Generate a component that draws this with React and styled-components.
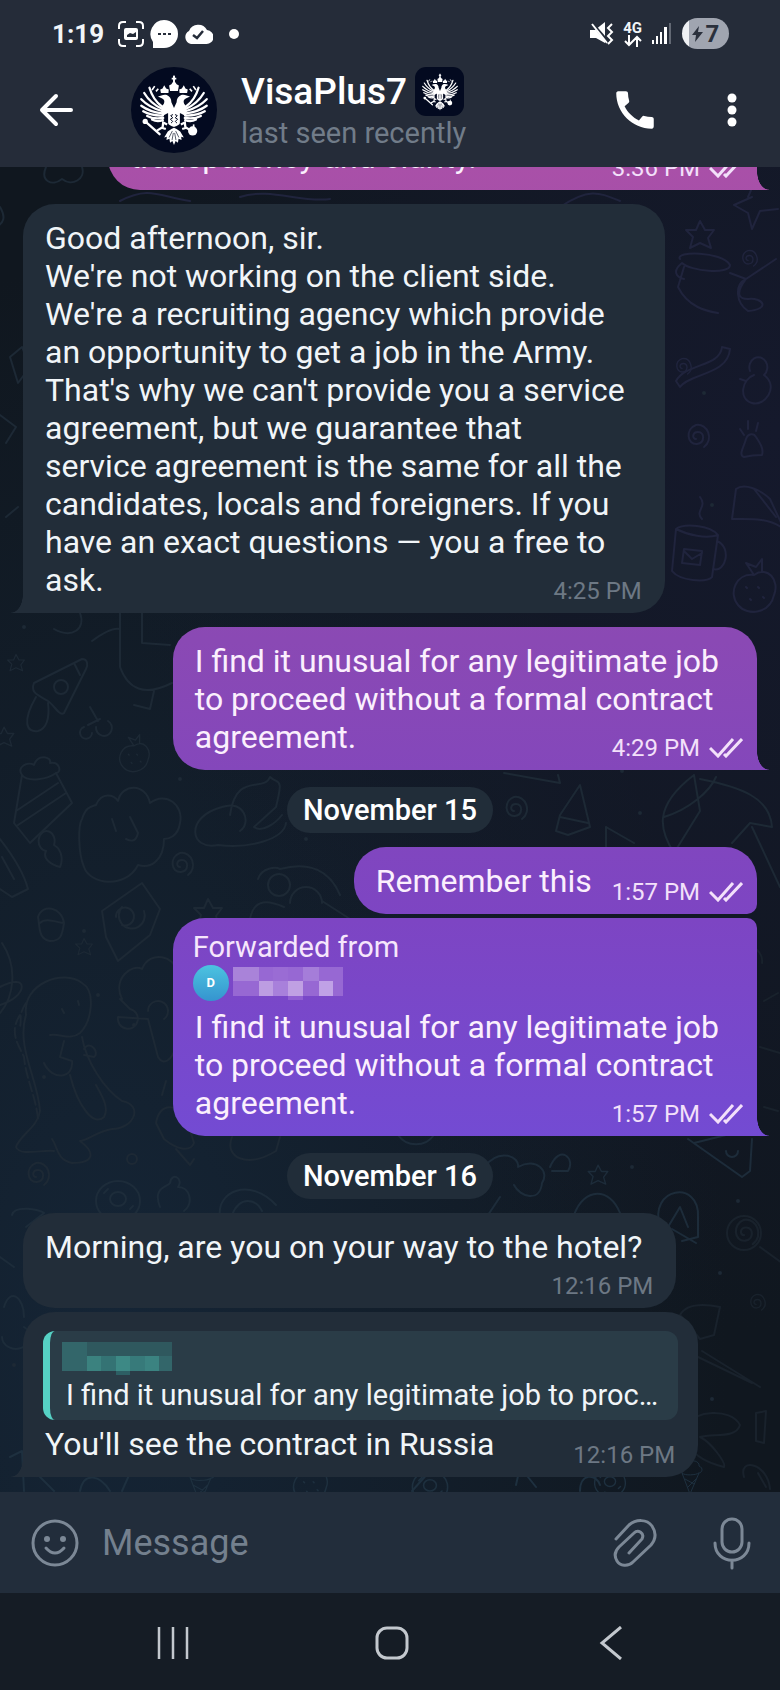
import React from 'react'
import styled, { createGlobalStyle } from 'styled-components'
import { MdCall } from 'react-icons/md'

const GlobalStyle = createGlobalStyle`
  * {
    box-sizing: border-box;
  }
  body {
    margin: 0;
    background: #151c25;
    font-family: Roboto, "Noto Sans", sans-serif;
    color: #f1f5f8;
  }
  button {
    display: flex;
    align-items: center;
    justify-content: center;
    padding: 0;
    border: 0;
    background: none;
    color: inherit;
    cursor: pointer;
  }
  svg {
    display: block;
    flex: none;
  }
`
const Page = styled.div`
  display: flex;
  flex-direction: column;
  height: 100vh;
`

/* header */
const Header = styled.header`
  background: #252c39;
  padding-bottom: 14px;
`
const StatusBar = styled.div`
  display: flex;
  align-items: center;
  justify-content: space-between;
  height: 67px;
  padding: 0 51px 0 52px;
`
const StatusGroup = styled.div`
  display: flex;
  align-items: center;
  gap: ${({ gap }) => gap}px;
`
const Clock = styled.time`
  font-size: 26px;
  font-weight: 700;
  line-height: 32px;
  margin-right: 8px;
`
const Network = styled.div`
  display: flex;
  flex-direction: column;
  align-items: center;
  font-size: 15px;
  font-weight: 700;
  line-height: 14px;
`
const Battery = styled.div`
  display: flex;
  align-items: center;
  justify-content: center;
  gap: 3px;
  width: 47px;
  height: 31px;
  border-radius: 16px;
  background: linear-gradient(to right, #eef0f3 7px, #a0a5b0 7px);
  color: #2a303c;
  font-size: 24px;
  font-weight: 700;
`
const ChatBar = styled.div`
  display: flex;
  align-items: center;
  height: 86px;
  padding: 0 24px 0 32px;
`
const BackButton = styled.button`
  width: 48px;
  height: 48px;
  margin-right: 51px;
`
const Avatar = styled.div`
  display: flex;
  align-items: center;
  justify-content: center;
  width: ${({ small }) => (small ? 49 : 86)}px;
  height: ${({ small }) => (small ? 49 : 86)}px;
  border-radius: ${({ small }) => (small ? '11px' : '50%')};
  background: #030a20;
`
const Contact = styled.div`
  flex: 1;
  align-self: flex-start;
  padding-left: 24px;
`
const NameRow = styled.div`
  display: flex;
  align-items: center;
  gap: 8px;
`
const Name = styled.h1`
  margin: 0;
  font-size: 37px;
  font-weight: 500;
  line-height: 49px;
  color: #fff;
`
const LastSeen = styled.p`
  margin: 0;
  font-size: 29px;
  line-height: 34px;
  color: #717c89;
`
const CallButton = styled.button`
  width: 50px;
  height: 50px;
  margin-right: 48px;
`
const MenuButton = styled.button`
  width: 48px;
  height: 48px;
`

/* messages */
const Chat = styled.main`
  position: relative;
  display: flex;
  flex: 1;
  flex-direction: column;
  justify-content: flex-end;
  min-height: 0;
  overflow: hidden;
  padding: 0 23px 15px;
  background:
    radial-gradient(ellipse at 100% 20%, #15192c 0%, rgba(21, 25, 44, 0) 60%),
    radial-gradient(ellipse at 15% 88%, #152536 0%, rgba(21, 37, 54, 0) 65%),
    #10171f;
`
const Wallpaper = styled.svg`
  position: absolute;
  top: 0;
  left: 0;
  width: 100%;
  height: 100%;
`
const Bubble = styled.article`
  position: relative;
  display: flex;
  flex-direction: column;
  align-self: ${({ out }) => (out ? 'flex-end' : 'flex-start')};
  width: ${({ wide }) => (wide ? 'calc(100% - 85px)' : 'auto')};
  margin-top: ${({ joined }) => (joined ? 4 : 14)}px;
  padding: ${({ top = 15 }) => top}px ${({ out }) => (out ? 14 : 20)}px 14px 20px;
  border-radius: 32px;
  border-top-right-radius: ${({ out, joined }) => (out && joined ? 10 : 32)}px;
  border-bottom-right-radius: ${({ out, tail }) => (out ? (tail ? 0 : 10) : 32)}px;
  border-bottom-left-radius: ${({ out, tail }) => (!out && tail ? 0 : 32)}px;
  background: ${({ out }) =>
    out
      ? 'linear-gradient(#a950a8 167px, #8a49b4 640px, #7d45c3 920px, #734bd3 1140px) fixed'
      : '#222d39'};

  &::after {
    content: "";
    display: ${({ tail }) => (tail ? 'block' : 'none')};
    position: absolute;
    bottom: 0;
    ${({ out }) => (out ? 'left: 100%' : 'right: 100%')};
    width: 12px;
    height: 18px;
    background: inherit;
    mask: radial-gradient(
      ellipse 12px 18px at ${({ out }) => (out ? '100%' : '0')} 0,
      transparent 96%,
      #000 100%
    );
  }
`
const Line = styled.div`
  display: flex;
  align-items: flex-end;
  justify-content: space-between;
  gap: 18px;
`
const Text = styled.p`
  margin: 0;
  padding: 0 ${({ room = 2 }) => room}px 0 2px;
  font-size: 32px;
  line-height: 38px;
  white-space: pre-line;
  color: ${({ out }) => (out ? '#fbeffd' : '#f1f5f8')};
`
const Meta = styled.span`
  display: flex;
  align-items: center;
  align-self: flex-end;
  gap: 9px;
  height: 28px;
  margin: ${({ below }) => (below ? 6 : 0)}px ${({ out }) => (out ? 0 : 3)}px -6px 0;
  font-size: 24px;
  line-height: 28px;
  white-space: nowrap;
  color: ${({ out }) => (out ? '#f3e0fa' : '#6d7884')};
`
// floats beside the last line of a paragraph, past the text's own right padding
const EndMeta = styled(Meta)`
  float: right;
  margin: 16px ${({ out, room = 2 }) => (out ? -room : 3 - room)}px -6px 0;
`
const DateChip = styled.div`
  position: relative;
  align-self: center;
  margin: 17px 0 0;
  padding: 0 16px;
  border-radius: 23px;
  background: #212d39;
  color: #fff;
  font-size: 29px;
  font-weight: 500;
  line-height: 46px;
`
const Forwarded = styled.div`
  padding: 0 0 7px;
  font-size: 29px;
  line-height: 36px;
  color: #f6e6fc;
`
const Sender = styled.div`
  display: flex;
  align-items: center;
  gap: 4px;
`
const Initial = styled.span`
  width: 36px;
  height: 36px;
  border-radius: 50%;
  background: linear-gradient(#4cc3e0, #3594cf);
  color: #fff;
  font-size: 13px;
  font-weight: 700;
  line-height: 36px;
  text-align: center;
`
const Quote = styled.blockquote`
  margin: 0 0 5px;
  padding: 11px 20px 7px 12px;
  border-left: 7px solid #56d1c4;
  border-radius: 12px;
  background: #2a3c47;
  font-size: 29px;
  line-height: 36px;
`
const QuoteText = styled.p`
  margin: 0;
  padding: 2px 0 0 4px;
  white-space: nowrap;
`

/* composer and system bar */
const Composer = styled.form`
  display: flex;
  align-items: center;
  height: 101px;
  padding: 0 23px 0 31px;
  background: #222d3b;
  color: #7c8896;
`
const MessageInput = styled.input`
  flex: 1;
  min-width: 0;
  margin-left: 23px;
  padding: 0;
  border: 0;
  outline: 0;
  background: none;
  color: #f1f5f8;
  font: 36px/44px Roboto, sans-serif;

  &::placeholder {
    color: #74808e;
    opacity: 1;
  }
`
const AttachButton = styled.button`
  margin-right: 49px;
`
const NavBar = styled.nav`
  display: grid;
  grid-template-columns: repeat(3, 1fr);
  height: 97px;
  padding: 3px 60px 0 64px;
  background: #151c25;
  color: #c3c8ce;
`

// one half of the crest, drawn from the centre axis outwards
const CrestHalf = () => (
  <>
    <g fill="none" stroke="#fff" strokeWidth="7" strokeLinecap="round">
      <path d="M36 -8Q64 -28 75 -66" />
      <path d="M37 -2Q72 -18 91 -50" />
      <path d="M37 5Q76 -6 100 -31" />
      <path d="M36 12Q74 8 100 -11" />
      <path d="M34 19Q70 20 94 6" />
      <path d="M33 26Q62 31 82 20" />
      <path d="M34 33Q52 40 67 31" />
    </g>
    <path fill="#fff" d="M0 12L0 -4L8 -22C8 -33 13 -40 22 -44C31 -47 40 -42 49 -39L36 -33C29 -30 28 -24 31 -17L38 -8L38 22L20 12Z" />
    <path fill="#fff" d="M17 -50L40 -50L42 -61L35 -64L30 -74L24 -64L16 -61Z" />
    <path fill="#fff" d="M0 -56L12 -56L15 -73L8 -77L4 -83L0 -84Z" />
    <path fill="none" stroke="#fff" strokeWidth="5" d="M0 -103L0 -80M0 -94L7 -94M48 -63L55 -55M59 -71L67 -59" />
    <path fill="#fff" d="M0 8L18 8L18 40C18 48 8 50 0 54Z" />
    <path fill="none" stroke="#030a20" strokeWidth="3" d="M3 16L10 19L4 26L11 30L4 37L9 42" />
    <path fill="none" stroke="#fff" strokeWidth="7" d="M21 46L33 40L35 57L25 60M35 55L52 65" />
    <path fill="#fff" d="M0 56L8 60L19 68L30 86L22 84L23 94L14 90L12 102L5 97L0 109Z" />
    <path fill="none" stroke="#030a20" strokeWidth="2" d="M5 66L15 86M2 72L6 94" />
  </>
)
const Crest = ({ size }) => (
  <svg width={size} height={size} viewBox="-108 -108 216 220" aria-hidden="true">
    <CrestHalf />
    <g transform="scale(-1 1)">
      <CrestHalf />
    </g>
    <path fill="none" stroke="#fff" strokeWidth="7" strokeLinecap="round" d="M-88 37L-44 76" />
    <circle cx="-88" cy="37" r="8" fill="#fff" />
    <circle cx="57" cy="66" r="14" fill="#fff" />
    <path stroke="#fff" strokeWidth="5" d="M60 46V56" />
  </svg>
)

const Checks = () => (
  <svg width="34" height="20" viewBox="0 0 34 20" fill="none" stroke="currentColor" strokeWidth="3" aria-hidden="true">
    <path d="M1 10L9 18L24 1" />
    <path d="M15 16L17 18L33 1" />
  </svg>
)

const Pixels = ({ cells, base }) => (
  <svg width={110} height={33} viewBox="0 0 110 33" aria-hidden="true">
    <rect width="110" height="29" fill={base} />
    {cells.map(([x, y, w, h, fill]) => (
      <rect key={`${x}-${y}`} x={x} y={y} width={w} height={h} fill={fill} />
    ))}
  </svg>
)

const purpleCells = [
  [0, 0, 26, 14, '#a983d9'],
  [40, 0, 15, 14, '#9a6cd4'],
  [70, 0, 16, 14, '#a57dd9'],
  [26, 14, 14, 15, '#bd9de2'],
  [40, 14, 15, 15, '#a880db'],
  [55, 14, 15, 15, '#c0a0e3'],
  [86, 14, 14, 15, '#c0a1e6'],
  [55, 29, 15, 4, '#905fd2'],
]
const tealCells = [
  [25, 0, 85, 14, '#2f585e'],
  [25, 14, 14, 15, '#3b827f'],
  [39, 14, 15, 15, '#347374'],
  [54, 14, 14, 15, '#3d8985'],
  [68, 14, 15, 15, '#377a7a'],
  [83, 14, 14, 15, '#3b8381'],
  [54, 29, 14, 4, '#2d5f64'],
]

const Star = ({ at, s = 1 }) => (
  <path transform={`translate(${at}) scale(${s})`} d="M0 -14L5 -5L14 -5L8 3L11 13L0 8L-10 13L-7 2L-14 -5L-4 -5Z" />
)
const Swirl = ({ at, s = 1 }) => (
  <path transform={`translate(${at}) scale(${s})`} d="M0 2C-4 2 -4 -5 2 -5C9 -5 9 6 1 7C-9 8 -11 -8 0 -12C12 -14 18 3 8 10" />
)
const Cloud = ({ at, s = 1 }) => (
  <path transform={`translate(${at}) scale(${s})`} d="M-28 -22C-22 -36 -10 -32 -6 -26C-2 -44 22 -44 26 -24C42 -36 60 -22 56 -4C54 10 44 12 40 12C40 34 26 42 14 38C2 62 -34 58 -40 40C-46 26 -46 -2 -42 -8C-38 -20 -34 -20 -28 -22ZM-12 -8L-8 4M6 -10L14 6C12 16 6 14 2 12" />
)
const Fruit = ({ at, s = 1 }) => (
  <path transform={`translate(${at}) scale(${s})`} d="M0 -16C14 -26 26 -10 20 4C16 22 -6 26 -16 14C-26 2 -18 -18 0 -16ZM0 -16L-8 -28L2 -24L8 -32L8 -19M-8 -4L-7 -3M4 -4L5 -3M-4 8L-3 9M9 6L10 7" />
)
const Cake = ({ at, s = 1 }) => (
  <path transform={`translate(${at}) scale(${s})`} d="M-20 -26L-28 22L-12 42L30 2L14 -28M-20 -26C-26 -34 -14 -40 -8 -36C-4 -48 10 -44 8 -38C18 -40 20 -28 14 -28C6 -22 -14 -18 -20 -26ZM-26 10L16 -18M-24 24L24 -8" />
)
const Pizza = ({ at, s = 1 }) => (
  <path transform={`translate(${at}) scale(${s})`} d="M-26 -8L22 -32C28 -32 28 -26 26 -22L4 22C0 26 -6 14 -12 10C-22 4 -30 2 -26 -8ZM8 -4A7 7 0 1 1 -6 -4A7 7 0 1 1 8 -4M-24 6C-38 30 -34 42 -22 40C-14 38 -10 28 -12 12M14 -28L20 -16" />
)
const Mug = ({ at, s = 1 }) => (
  <path transform={`translate(${at}) scale(${s})`} d="M-20 -16L-24 26C-16 36 10 38 16 32L22 -10C14 -20 -12 -22 -20 -16C-8 -10 10 -6 22 -10M21 -4C36 2 30 28 17 24M-12 4L6 6L4 20L-14 18ZM-12 6L-4 14L6 8M6 -26C-2 -34 12 -38 4 -48" />
)
const Ring = ({ at, s = 1 }) => (
  <path transform={`translate(${at}) scale(${s})`} d="M22 0A22 20 0 1 1 -22 0A22 20 0 1 1 22 0M8 -2A8 7 0 1 1 -8 -2A8 7 0 1 1 8 -2M-14 -8L-10 -12M12 8L15 5M-8 13L-4 14" />
)
const Cone = ({ at, s = 1 }) => (
  <path transform={`translate(${at}) scale(${s})`} d="M-16 -8L0 34L18 -8C12 -4 -10 -2 -16 -8C-22 -24 -8 -28 -4 -24C0 -38 20 -32 18 -22C28 -18 24 -8 18 -8M-10 4L8 14M12 4L-4 20" />
)

// faint doodles behind the conversation
const Doodles = () => (
  <Wallpaper
    viewBox="0 0 780 1325"
    preserveAspectRatio="xMinYMin slice"
    fill="none"
    strokeWidth="2"
    strokeLinejoin="round"
    strokeLinecap="round"
    aria-hidden="true"
  >
    <g stroke="#20243d">
      <Star at="700 68" />
      <path d="M752 30L734 38L748 46L752 62L760 44L778 42M748 30L756 12M680 92C674 84 722 84 730 98C730 108 690 104 682 96C672 104 676 110 684 112M684 100L678 120C688 140 706 144 718 146M730 106L746 112L776 92M746 112C734 128 740 132 748 132C762 130 772 142 748 144C736 136 734 118 746 112" />
      <Swirl at="748 92" s={0.7} />
      <path d="M680 220C690 206 728 208 730 182L722 180C720 200 686 196 676 214Z" />
      <Swirl at="682 200" s={0.7} />
      <path d="M750 204A9 10 0 1 1 764 208C780 220 764 240 752 236C738 232 742 212 754 208M740 212L746 214" />
      <Swirl at="696 270" />
      <path d="M740 262L744 268M748 254V262M758 256L756 264M746 272C744 280 738 288 744 290C752 288 756 288 762 288C764 282 760 276 756 270C754 266 748 266 746 272Z" />
      <path d="M736 322C744 316 760 322 770 332L784 362C768 350 748 352 732 352ZM754 322L776 350" />
      <Mug at="696 378" />
      <Fruit at="754 424" />
      <path d="M560 40C590 20 600 26 620 34M120 34C150 18 160 30 190 34M240 30C270 20 300 36 330 32" />
    </g>
    <g stroke="#1d2935">
      <path d="M46 0C40 14 52 20 62 12C72 20 86 12 82 0M0 40C6 50 4 56 -4 60M10 190L22 180L30 200L18 216ZM0 248L16 260L6 276M6 350L18 340" />
      <path d="M54 462C72 472 86 462 80 446M120 446V500C128 522 144 530 172 516M142 446V476L170 478M92 474C100 468 112 460 120 462M154 524L150 542L134 538" />
      <Star at="16 496" s={0.6} />
      <Pizza at="60 524" />
      <path d="M88 558L100 552M90 540L98 554M92 566A6 6 0 1 1 84 560M108 554A8 8 0 1 1 96 560" />
      <Star at="4 570" s={0.7} />
      <Fruit at="134 590" s={0.7} />
      <Cake at="42 634" />
      <Cloud at="124 660" />
      <path d="M230 648C236 604 264 626 270 610C278 618 284 608 276 640M222 640C184 650 190 684 218 678C250 682 284 672 286 656M222 640C244 632 252 656 240 664M276 640L254 660C262 666 276 656 282 648" />
      <Swirl at="180 698" />
      <Swirl at="514 642" />
      <path d="M46 684A8 10 0 1 1 54 678C64 684 62 696 60 700C52 698 42 692 46 684M0 672C14 690 24 706 28 722L12 730L0 722M2 690L14 712" />
      <path d="M258 712C262 700 276 700 280 702C310 694 330 704 340 728M268 718A11 11 0 1 1 290 718A11 11 0 1 1 268 718M290 736A13 13 0 1 1 322 736M250 752C254 730 270 734 284 740M322 734L350 752" />
      <path d="M504 606L560 616L558 608M560 648L580 618L590 660L568 668L556 664ZM560 650L588 656M606 660L634 676M606 660V680" />
      <path d="M694 608C652 640 660 664 674 686L700 644L694 608M700 612C740 620 770 630 772 660L750 656L732 676M664 650C690 642 710 624 716 610M752 660L780 720" />
      <path d="M102 744L142 716L160 742L150 768L118 794L106 770ZM116 750A9 9 0 1 1 122 758M144 744A13 13 0 1 1 122 740" />
      <path d="M38 750C42 736 62 740 64 756C62 770 60 774 50 774C38 772 40 760 38 750ZM40 756C46 750 58 756 64 756" />
      <Star at="208 746" />
      <Star at="84 780" s={0.6} />
      <path d="M0 820C30 804 28 830 0 838M2 776C18 800 14 830 0 846" />
      <path d="M26 848C22 816 64 802 82 816C96 824 92 854 80 866C70 874 60 866 50 868M82 870C86 894 104 922 122 934C144 938 134 962 112 962C98 964 86 974 80 974C96 986 94 996 72 996C56 992 58 980 52 972M26 848C16 880 38 912 40 944C38 960 20 968 16 980C20 990 44 982 54 984M44 896C52 914 74 912 72 894L60 890L64 874M70 908C78 940 94 960 104 950C110 940 100 926 96 918M84 882C90 872 100 886 94 890L84 888M62 842L64 846M78 834L79 838" />
      <path d="M20 848C8 866 20 880 24 890C26 912 36 930 38 952M26 836C18 848 22 852 20 860" strokeDasharray="10 4" />
      <path d="M122 832C112 812 132 796 142 802C150 782 176 790 176 804M120 832L130 842A10 10 0 1 1 118 850L148 852L158 890C164 900 172 892 176 880M148 844A10 10 0 1 1 164 852" />
      <path d="M156 956C160 934 178 938 186 950L194 976C190 986 176 982 164 972ZM176 982L190 998L194 992M162 928L166 914" />
      <Swirl at="36 1008" />
      <circle cx="132" cy="992" r="5" />
      <path d="M232 970C224 990 246 1002 276 984L280 970M340 1002C346 990 364 990 368 1000" />
    </g>
    <g stroke="#1d2c3a">
      <Ring at="118 1034" />
      <path d="M160 1040C152 1020 168 1020 170 1016C172 1004 184 1012 178 1020C190 1020 194 1036 184 1044M220 1050C216 1024 250 1010 276 1038M232 1048C240 1028 256 1032 262 1044" />
      <path d="M12 1048C14 1038 40 1042 44 1046L26 1060M0 1090L14 1100M4 1140C10 1120 24 1130 24 1150M2 1170A14 12 0 1 0 24 1160" />
      <path d="M398 968A22 22 0 0 0 434 968M484 1000C500 980 520 990 518 1000C536 990 550 1004 542 1016C540 1036 520 1030 514 1018M500 1030L488 1048M550 1000C560 976 576 992 568 1004L552 1004M574 1048C584 1020 610 1020 620 1046" />
      <Star at="598 1008" s={0.7} />
      <path d="M688 972L742 1010L750 1004L752 972M694 976L726 968M726 984A6 6 0 1 0 738 984" />
      <path d="M660 1060C648 1020 700 1012 698 1050L698 1070L682 1074M668 1060L680 1040L688 1060M672 1062L696 1076" />
    </g>
    <g stroke="#19222c">
      <Swirl at="744 1066" s={1.1} />
      <circle cx="744" cy="1066" r="17" />
      <path d="M760 1080L782 1096M680 1148C688 1134 710 1138 720 1140L714 1168L700 1172ZM702 1184L760 1220M698 1190L752 1216M686 1258C694 1244 730 1240 740 1258C736 1272 712 1266 700 1270C712 1276 726 1296 724 1300C708 1296 696 1290 690 1280M756 1246L766 1244L764 1276L756 1274Z" />
      <Swirl at="756 1136" s={0.7} />
      <path d="M744 1310C738 1290 768 1296 770 1322M758 1306L766 1320" />
      <path d="M750 780A14 14 0 0 1 762 796M764 834L778 826M760 880L780 886M764 940L778 944" />
    </g>
    <g stroke="#1e303f">
      <Cone at="200 1316" s={0.6} />
      <Fruit at="310 1318" s={0.8} />
      <path d="M10 1290L22 1284L24 1324M40 1310L54 1324M80 1324C84 1304 100 1308 110 1324M130 1306L122 1324M412 1324L430 1304M516 1318L520 1300L536 1320M580 1324C580 1306 596 1306 600 1318" />
      <Ring at="430 1320" s={0.8} />
      <Ring at="610 1316" s={0.7} />
      <Cone at="690 1310" s={0.5} />
    </g>
    <g fill="#1d2935">
      {['106 138', '84 764', '44 910', '134 858', '306 672', '640 646', '622 604', '704 226', '712 338', '632 1000', '738 1034', '720 1106', '712 1232', '14 1198', '24 460', '180 612', '98 828'].map((at) => (
        <circle key={at} transform={`translate(${at})`} r="2" />
      ))}
    </g>
  </Wallpaper>
)

const quoted = 'I find it unusual for any legitimate job\nto proceed without a formal contract\nagreement.'

const App = () => {
  const [draft, setDraft] = React.useState('')

  return (
    <Page>
      <GlobalStyle />
      <Header>
        <StatusBar>
          <StatusGroup gap={6}>
            <Clock>1:19</Clock>
            <svg width="26" height="26" viewBox="0 0 26 26" fill="none" stroke="#fff" strokeWidth="2">
              <path d="M1 8V5Q1 1 5 1H8M18 1H21Q25 1 25 5V8M25 18V21Q25 25 21 25H18M8 25H5Q1 25 1 21V18" />
              <path fillRule="evenodd" fill="#fff" stroke="none" d="M8 7H18Q20 7 20 9V17Q20 19 18 19H8Q6 19 6 17V9Q6 7 8 7ZM9 16H18V11L15 13L12 12L9 14Z" />
            </svg>
            <svg width="28" height="30" viewBox="0 0 28 30">
              <path fill="#fff" d="M14 1A14 14 0 1 1 14 29H3V23A14 14 0 0 1 14 1Z" />
              <path fill="#252c39" d="M8 14h3v2H8zM13 14h3v2h-3zM18 14h3v2h-3z" />
            </svg>
            <svg width="29" height="22" viewBox="0 0 29 22">
              <path fill="#fff" d="M7 21A7 7 0 0 1 5 8A10 10 0 0 1 23 7A7 7 0 0 1 22 21Z" />
              <path fill="none" stroke="#252c39" strokeWidth="2.5" d="M9 12L13 15L19 8" />
            </svg>
            <svg width="30" height="12" viewBox="0 0 30 12">
              <circle cx="15" cy="6" r="5" fill="#fff" />
            </svg>
          </StatusGroup>
          <StatusGroup gap={9}>
            <svg width="24" height="24" viewBox="0 0 24 24" fill="#fff">
              <path d="M0 8H5L15 0V21L6 16H0Z" />
              <path fill="none" stroke="#252c39" strokeWidth="3" d="M1 0L20 22" />
              <path fill="none" stroke="#fff" strokeWidth="2" d="M2 2L17 21M22 2L18 6L22 10L18 14L22 18L18 22" />
            </svg>
            <Network>
              4G
              <svg width="18" height="12" viewBox="0 0 18 12" fill="none" stroke="#fff" strokeWidth="2">
                <path d="M5 0V10M1 6L5 10L9 6M13 12V2M9 6L13 2L17 6" />
              </svg>
            </Network>
            <svg width="22" height="23" viewBox="0 0 22 23" fill="#fff">
              <path d="M1 18h2v4H1zM5 14h2v8H5zM9 10h2v12H9zM13 5h3v17h-3z" />
              <path fill="#626873" d="M18 1h2v21h-2z" />
            </svg>
            <Battery>
              <svg width="11" height="16" viewBox="0 0 11 16" fill="#2a303c">
                <path d="M7 0L0 9H4L3 16L11 6H6Z" />
              </svg>
              7
            </Battery>
          </StatusGroup>
        </StatusBar>
        <ChatBar>
          <BackButton aria-label="Back">
            <svg width="36" height="34" viewBox="0 0 36 34" fill="none" stroke="#fff" strokeWidth="4" strokeLinecap="round" strokeLinejoin="round">
              <path d="M18 3L4 17L18 31M4 17H33" />
            </svg>
          </BackButton>
          <Avatar>
            <Crest size={72} />
          </Avatar>
          <Contact>
            <NameRow>
              <Name>VisaPlus7</Name>
              <Avatar small>
                <Crest size={38} />
              </Avatar>
            </NameRow>
            <LastSeen>last seen recently</LastSeen>
          </Contact>
          <CallButton aria-label="Call">
            <MdCall size={50} color="#fff" />
          </CallButton>
          <MenuButton aria-label="More options">
            <svg width="10" height="34" viewBox="0 0 10 34" fill="#fff">
              <circle cx="5" cy="5" r="4.5" />
              <circle cx="5" cy="17" r="4.5" />
              <circle cx="5" cy="29" r="4.5" />
            </svg>
          </MenuButton>
        </ChatBar>
      </Header>

      <Chat>
        <Doodles />
        <Bubble out tail wide>
          <Line>
            <Text out>transparency and clarity.</Text>
            <Meta out>
              <time>3:36 PM</time>
              <Checks />
            </Meta>
          </Line>
        </Bubble>
        <Bubble tail>
          <Text room={20}>
            {`Good afternoon, sir.
We're not working on the client side.
We're a recruiting agency which provide
an opportunity to get a job in the Army.
That's why we can't provide you a service
agreement, but we guarantee that
service agreement is the same for all the
candidates, locals and foreigners. If you
have an exact questions — you a free to
ask.`}
            <EndMeta room={20}>
              <time>4:25 PM</time>
            </EndMeta>
          </Text>
        </Bubble>
        <Bubble out tail>
          <Text out room={24}>
            {quoted}
            <EndMeta out room={24}>
              <time>4:29 PM</time>
              <Checks />
            </EndMeta>
          </Text>
        </Bubble>
        <DateChip>November 15</DateChip>
        <Bubble out>
          <Line>
            <Text out>Remember this</Text>
            <Meta out>
              <time>1:57 PM</time>
              <Checks />
            </Meta>
          </Line>
        </Bubble>
        <Bubble out tail joined top={11}>
          <Forwarded>
            Forwarded from
            <Sender>
              <Initial>D</Initial>
              <Pixels base="#9768d3" cells={purpleCells} />
            </Sender>
          </Forwarded>
          <Text out room={24}>
            {quoted}
            <EndMeta out room={24}>
              <time>1:57 PM</time>
              <Checks />
            </EndMeta>
          </Text>
        </Bubble>
        <DateChip>November 16</DateChip>
        <Bubble>
          <Text room={14}>Morning, are you on your way to the hotel?</Text>
          <Meta below>
            <time>12:16 PM</time>
          </Meta>
        </Bubble>
        <Bubble tail joined top={19}>
          <Quote>
            <Pixels base="#33666a" cells={tealCells} />
            <QuoteText>I find it unusual for any legitimate job to proc…</QuoteText>
          </Quote>
          <Line>
            <Text>You'll see the contract in Russia</Text>
            <Meta>
              <time>12:16 PM</time>
            </Meta>
          </Line>
        </Bubble>
      </Chat>

      <Composer onSubmit={(e) => e.preventDefault()}>
        <button type="button" aria-label="Emoji">
          <svg width="48" height="48" viewBox="0 0 48 48" fill="none" stroke="currentColor" strokeWidth="3" strokeLinecap="round">
            <circle cx="24" cy="24" r="22" />
            <path d="M15 29Q24 39 33 29" />
            <circle cx="16" cy="20" r="3" fill="currentColor" stroke="none" />
            <circle cx="32" cy="20" r="3" fill="currentColor" stroke="none" />
          </svg>
        </button>
        <MessageInput
          aria-label="Message"
          placeholder="Message"
          value={draft}
          onChange={(e) => setDraft(e.target.value)}
        />
        <AttachButton type="button" aria-label="Attach">
          <svg width="48" height="48" viewBox="0 0 48 48" fill="none" stroke="currentColor" strokeWidth="3" strokeLinecap="round">
            <path d="M6 20L19 6C26 0 37 0 42 7C46 13 46 20 41 26L23 43C18 48 10 47 7 42C4 37 5 32 9 28L24 14C28 10 35 14 32 20L19 34" />
          </svg>
        </AttachButton>
        <button type="button" aria-label="Voice message">
          <svg width="50" height="54" viewBox="0 0 50 54" fill="none" stroke="currentColor" strokeWidth="3" strokeLinecap="round">
            <rect x="15" y="3" width="20" height="33" rx="10" />
            <path d="M8 27C8 50 42 50 42 27M25 44V52" />
          </svg>
        </button>
      </Composer>

      <NavBar>
        <button aria-label="Recent apps">
          <svg width="32" height="32" viewBox="0 0 32 32" stroke="currentColor" strokeWidth="2.5">
            <path d="M2 0V32M16 0V32M30 0V32" />
          </svg>
        </button>
        <button aria-label="Home">
          <svg width="34" height="34" viewBox="0 0 34 34" fill="none" stroke="currentColor" strokeWidth="3">
            <rect x="2" y="2" width="30" height="30" rx="10" />
          </svg>
        </button>
        <button aria-label="Back">
          <svg width="24" height="34" viewBox="0 0 24 34" fill="none" stroke="currentColor" strokeWidth="3">
            <path d="M22 1L3 17L22 33" />
          </svg>
        </button>
      </NavBar>
    </Page>
  )
}

export default App
